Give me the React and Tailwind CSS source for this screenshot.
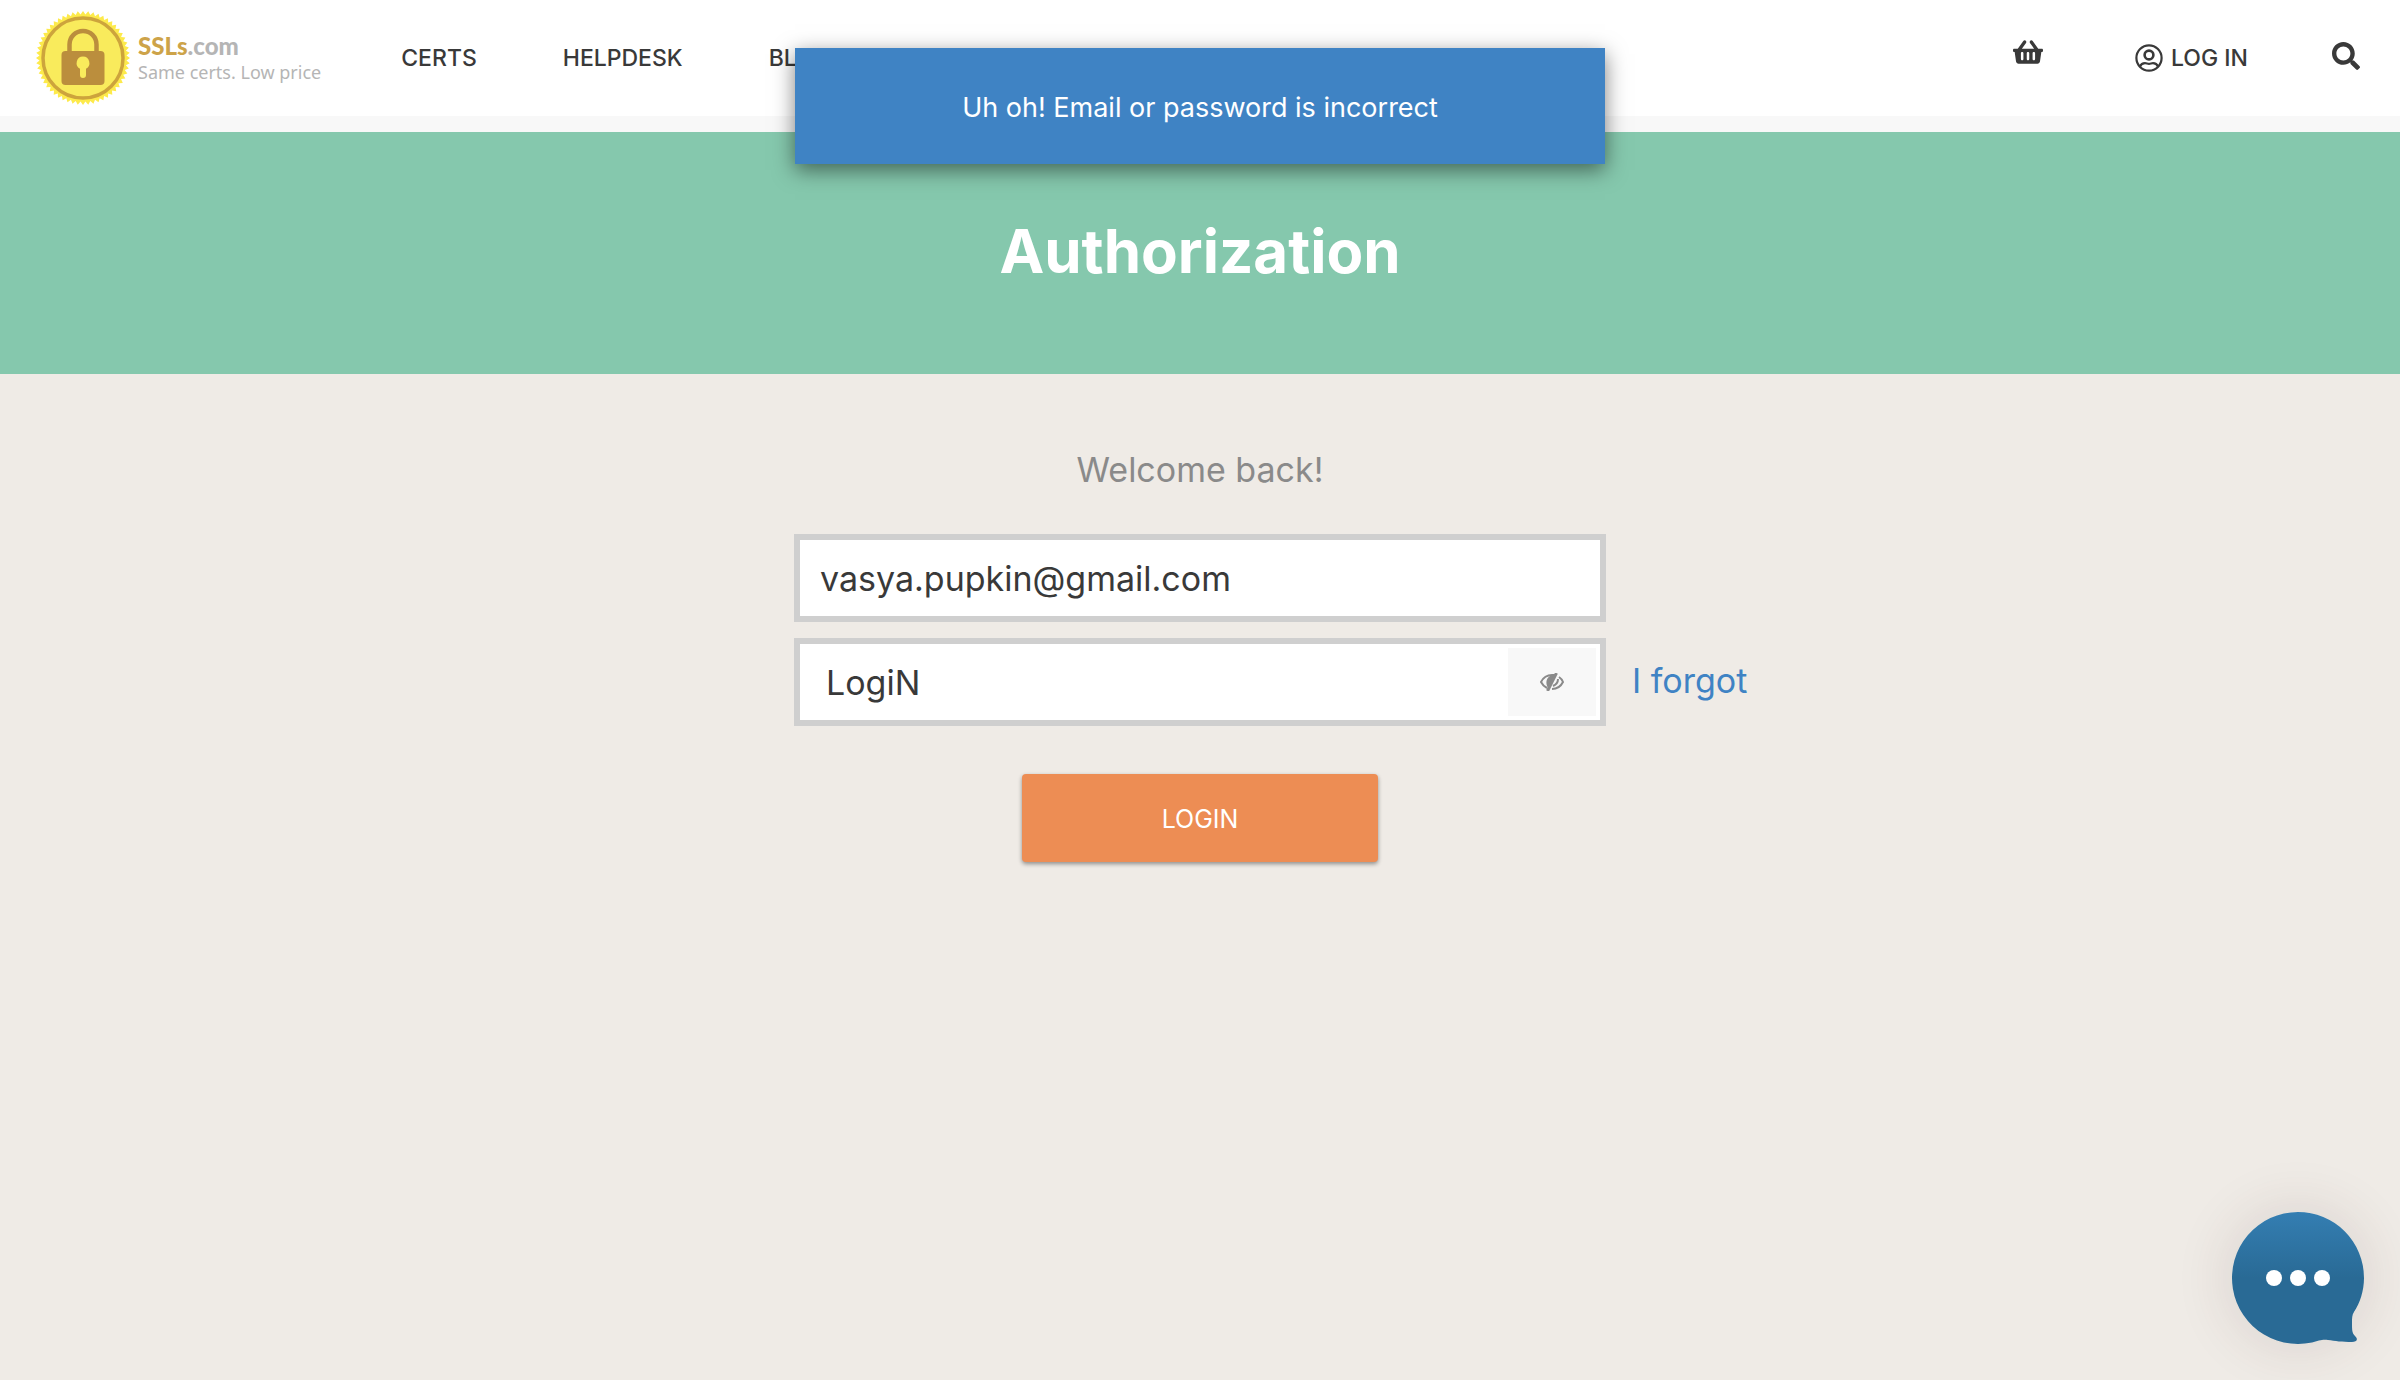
import { FaSearch, FaShoppingBasket } from "react-icons/fa";

const sealPoints = Array.from({ length: 112 }, (_, i) => {
  const r = i % 2 ? 43.5 : 47;
  const a = (i * Math.PI) / 56 - Math.PI / 2;
  return `${(47 + r * Math.cos(a)).toFixed(2)},${(47 + r * Math.sin(a)).toFixed(2)}`;
}).join(" ");

function Seal() {
  return (
    <svg viewBox="0 0 94 94" className="size-[94px]" aria-hidden="true">
      <polygon points={sealPoints} fill="#fdea4b" />
      <circle cx="47" cy="47" r="40" fill="#f9eb5c" stroke="#cda43c" strokeWidth="3.500" />
      <path d="M33.500 43V33.500a13.500 13.500 0 0 1 27 0V43" fill="none" stroke="#bb8e3d" strokeWidth="4.500" />
      <rect x="25.500" y="40" width="43" height="34" rx="4" fill="#bb8e3d" />
      <path d="M47 45.500a6.500 6.500 0 0 1 3 12.200V64a3 3 0 0 1-6 0v-6.300a6.500 6.500 0 0 1 3-12.200z" fill="#f9eb5c" />
    </svg>
  );
}

function UserIcon() {
  return (
    <svg viewBox="0 0 28 28" className="size-7" fill="none" stroke="currentColor" strokeWidth="2.200" aria-hidden="true">
      <circle cx="14" cy="14" r="12.600" />
      <circle cx="14" cy="11" r="4.400" strokeWidth="2.600" />
      <path d="M5 22.500c1-2.400 3-3.300 5-3.300 1.600 0 2.400.6 4 .6s2.400-.6 4-.6c2 0 4 .9 5 3.300" />
    </svg>
  );
}

function EyeSlashIcon() {
  return (
    <svg viewBox="0 0 24 18" className="h-[18px] w-6" fill="none" stroke="currentColor" strokeWidth="2" aria-hidden="true">
      <path d="M7 15C4 13.500 2 11 1 9c2-4 6-7 11-7h3" />
      <path d="M15 2 8 15C5 10 6 4 12 2z" fill="currentColor" stroke="none" />
      <path d="M16.500 0 7.500 18" strokeWidth="3" />
      <path d="M19 4c2 1.300 3.300 3.200 4 5-2 4-6 7-11 7M18 6c0 3-1.500 5.500-5 7" />
    </svg>
  );
}

function ChatIcon() {
  return (
    <svg viewBox="0 0 132 132" className="size-[132px]" aria-hidden="true">
      <defs>
        <linearGradient id="bubble" x1="0" y1="0" x2="0" y2="1">
          <stop offset="0" stopColor="#347eb2" />
          <stop offset="0.5" stopColor="#296a95" />
        </linearGradient>
      </defs>
      <path
        d="M66 0a66 66 0 0 1 66 66c0 13-4 25-10 34-2 3-2 6-2 10 0 8 0 11 3 14 4 4 1 6-3 6-10 0-17-1-24-2-4-.5-6 0-9 .57A66 66 0 1 1 66 0z"
        fill="url(#bubble)"
      />
      <g fill="#fff">
        <circle cx="42" cy="66" r="8" />
        <circle cx="66" cy="66" r="8" />
        <circle cx="90" cy="66" r="8" />
      </g>
    </svg>
  );
}

export default function App() {
  return (
    <div className="relative flex min-h-screen flex-col bg-[#efebe6] font-['Inter',sans-serif] text-[#393939]">
      <header className="flex h-[132px] items-center justify-between border-b-16 border-[#f8f8f8] bg-white pr-10 pl-9">
        <div className="flex items-center">
          <a href="#home" className="flex items-center gap-2">
            <Seal />
            <span className="flex flex-col font-['Lato',sans-serif] text-[#b5b5b5]">
              <span className="text-2xl leading-7 font-black">
                <span className="text-[#cda349]">SSLs</span>.com
              </span>
              <span className="font-['Noto_Sans',sans-serif] text-lg leading-6">Same certs. Low price</span>
            </span>
          </a>
          <nav className="ml-20 flex gap-[86px] text-[23px] font-medium">
            <a href="#certs">CERTS</a>
            <a href="#helpdesk">HELPDESK</a>
            <a href="#blog">BLOG</a>
          </nav>
        </div>
        <div className="flex items-center gap-[84px]">
          <a href="#cart" aria-label="Cart" className="mr-2 pb-3">
            <FaShoppingBasket className="size-[30px]" />
          </a>
          <a href="#login" className="flex items-center gap-2 text-[23px] font-medium">
            <UserIcon />
            LOG IN
          </a>
          <button type="button" aria-label="Search" className="pb-1">
            <FaSearch className="size-7" />
          </button>
        </div>
      </header>

      <div
        role="alert"
        className="absolute top-12 left-1/2 flex h-[116px] w-[810px] -translate-x-1/2 items-center justify-center bg-[#3f83c4] pt-1 text-[27px] text-white shadow-[0_6px_20px_rgba(0,0,0,0.5)]"
      >
        Uh oh! Email or password is incorrect
      </div>

      <div className="flex h-[242px] items-center justify-center bg-[#85c8ad] pb-1">
        <h1 className="text-[60px] font-bold text-white">Authorization</h1>
      </div>

      <main className="flex flex-col items-center pt-[72px]">
        <h2 className="text-[34px] leading-12 text-[#8a8a8a]">Welcome back!</h2>
        <form className="mt-10 flex w-[812px] flex-col items-center gap-4">
          <input
            type="email"
            aria-label="Email"
            defaultValue="vasya.pupkin@gmail.com"
            className="h-[88px] w-full border-6 border-[#cfcfcf] bg-white px-5 text-[34px] outline-none"
          />
          <div className="relative w-full">
            <div className="flex h-[88px] w-full items-center border-6 border-[#cfcfcf] bg-white pr-1">
              <input
                type="text"
                aria-label="Password"
                defaultValue="LogiN"
                className="h-full min-w-0 flex-1 px-[26px] text-[34px] outline-none"
              />
              <button
                type="button"
                aria-label="Hide password"
                className="flex h-[68px] w-[88px] items-center justify-center bg-[#f8f8f8] text-[#8a8a8a]"
              >
                <EyeSlashIcon />
              </button>
            </div>
            <a
              href="#forgot"
              className="absolute top-0 left-full ml-[26px] flex h-[84px] items-center text-[34px] whitespace-nowrap text-[#3f83c4]"
            >
              I forgot
            </a>
          </div>
          <button
            type="submit"
            className="mt-8 h-[88px] w-[356px] rounded-sm bg-[#ed8d54] pt-1 text-[25px] text-white shadow-[0_2px_4px_rgba(0,0,0,0.4)]"
          >
            LOGIN
          </button>
        </form>
      </main>

      <button
        type="button"
        aria-label="Open chat"
        className="fixed right-9 bottom-9 rounded-full shadow-[0_0_60px_rgba(80,40,40,0.14)]"
      >
        <ChatIcon />
      </button>
    </div>
  );
}
